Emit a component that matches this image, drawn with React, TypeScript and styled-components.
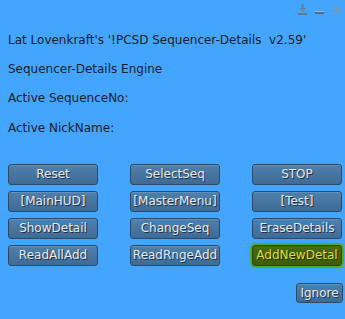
import React from "react";
import styled, { createGlobalStyle } from "styled-components";

const Global = createGlobalStyle`
  html, body { margin: 0; padding: 0; background: #43a5fe; }
  body { font-family: "DejaVu Sans", "Liberation Sans", sans-serif; }
`;

const Panel = styled.div`
  width: 345px;
  height: 319px;
  background: #43a5fe;
  position: relative;
  box-sizing: border-box;
  padding: 26px 2px 0 8px;
  display: flex;
  flex-direction: column;
`;

const Controls = styled.div`
  position: absolute;
  top: 4px;
  right: 3px;
  display: flex;
  gap: 6px;
  align-items: center;
`;

const Line = styled.div<{ $h?: number }>`
  font-size: 12px;
  line-height: 29px;
  height: ${(p) => p.$h ?? 29}px;
  color: #16202c;
  white-space: pre;
`;

const Grid = styled.div`
  margin-top: 21px;
  display: grid;
  grid-template-columns: repeat(3, 90px);
  column-gap: 32px;
  row-gap: 6px;
`;

const Btn = styled.button<{ $active?: boolean }>`
  box-sizing: border-box;
  height: 21px;
  padding: 0;
  border-radius: 3px;
  font-family: "DejaVu Sans", sans-serif;
  font-size: 12px;
  line-height: 19px;
  white-space: nowrap;
  overflow: hidden;
  cursor: pointer;
  border: 1px solid ${(p) => (p.$active ? "#2f4508" : "#2c4a68")};
  background: ${(p) =>
    p.$active
      ? "linear-gradient(#4a6a12, #3e5b0d)"
      : "linear-gradient(#4f80ac, #3e6b96)"};
  color: ${(p) => (p.$active ? "#dede38" : "#e8ecef")};
  text-shadow: 1px 1px 0 ${(p) => (p.$active ? "#1f2c05" : "#1c3048")};
  box-shadow: ${(p) =>
    p.$active
      ? "0 0 0 2px #52ac26"
      : "inset 0 1px 0 rgba(255,255,255,0.12)"};
`;

const Footer = styled.div`
  margin-top: 17px;
  display: flex;
  justify-content: flex-end;
`;

const SmallBtn = styled(Btn)`
  width: 47px;
  height: 20px;
  line-height: 18px;
`;

const IconWrap = styled.span`
  display: inline-flex;
  width: 11px;
  height: 12px;
`;

const labels = [
  "Reset", "SelectSeq", "STOP",
  "[MainHUD]", "[MasterMenu]", "[Test]",
  "ShowDetail", "ChangeSeq", "EraseDetails",
  "ReadAllAdd", "ReadRngeAdd", "AddNewDetal",
];

export default function App() {
  return (
    <>
      <Global />
      <Panel>
        <Controls>
          <IconWrap>
            <svg width="11" height="12" viewBox="0 0 11 12">
              <rect x="4" y="0" width="3" height="4" fill="#6b86a0" />
              <path d="M1.5 4 H9.5 L5.5 8 Z" fill="#6b86a0" />
              <rect x="1" y="9" width="9" height="2" fill="#5d7892" />
            </svg>
          </IconWrap>
          <IconWrap>
            <svg width="11" height="12" viewBox="0 0 11 12">
              <rect x="1" y="7" width="9" height="1" fill="#9fb6cc" />
              <rect x="1" y="8" width="9" height="2" fill="#4f6c88" />
            </svg>
          </IconWrap>
          <IconWrap>
            <svg width="11" height="12" viewBox="0 0 11 12">
              <path d="M2 2.5 L9 9.5 M9 2.5 L2 9.5" stroke="#7f95aa" strokeWidth="1.8" />
            </svg>
          </IconWrap>
        </Controls>
        <Line>Lat Lovenkraft's '!PCSD Sequencer-Details  v2.59'</Line>
        <Line>Sequencer-Details Engine</Line>
        <Line $h={30}>Active SequenceNo:</Line>
        <Line>Active NickName:</Line>
        <Grid>
          {labels.map((l) => (
            <Btn key={l} $active={l === "AddNewDetal"}>{l}</Btn>
          ))}
        </Grid>
        <Footer>
          <SmallBtn>Ignore</SmallBtn>
        </Footer>
      </Panel>
    </>
  );
}
